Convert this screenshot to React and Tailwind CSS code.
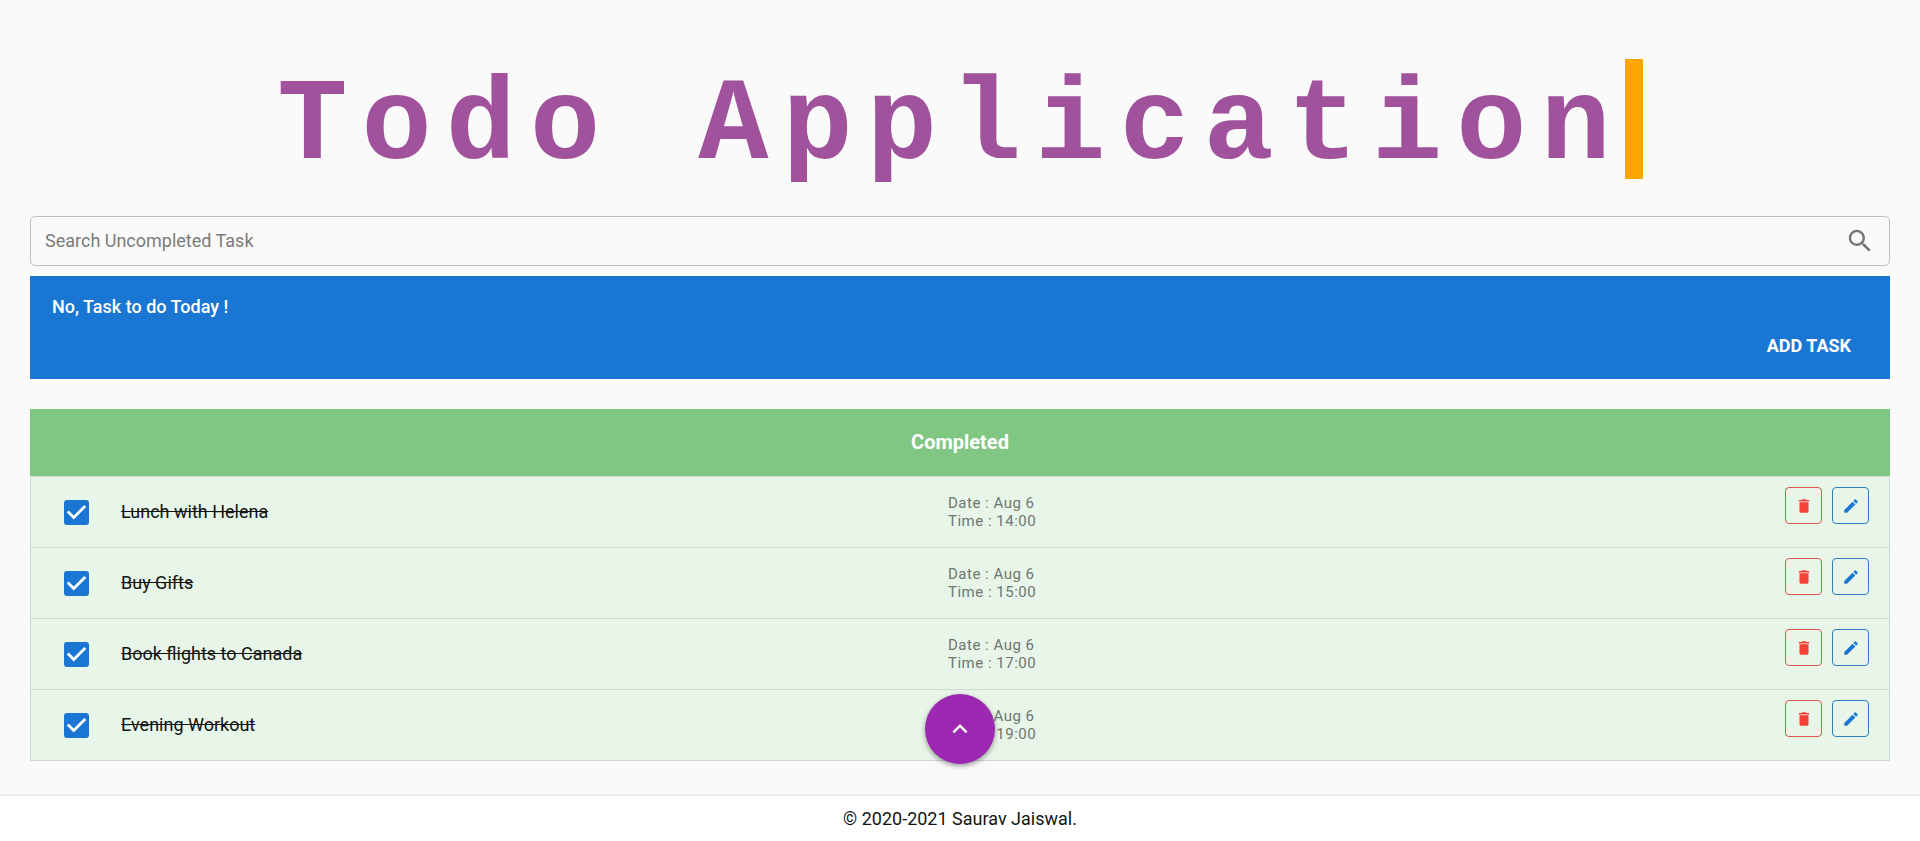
import { useState } from "react";
import { MdDelete, MdEdit, MdKeyboardArrowUp, MdSearch } from "react-icons/md";

const initialTasks = [
  { id: "lunch", title: "Lunch with Helena", date: "Aug 6", time: "14:00", done: true },
  { id: "gifts", title: "Buy Gifts", date: "Aug 6", time: "15:00", done: true },
  { id: "flights", title: "Book flights to Canada", date: "Aug 6", time: "17:00", done: true },
  { id: "workout", title: "Evening Workout", date: "Aug 6", time: "19:00", done: true },
];

function Title() {
  return (
    <header className="flex justify-center pt-[59px]">
      <h1 className="border-r-[18px] border-[#ffa500] pt-4 font-['Liberation_Mono',monospace] text-[117px] leading-[104px] font-bold tracking-[14px] whitespace-nowrap text-[#a0529c]">
        Todo Application
      </h1>
    </header>
  );
}

function SearchBar() {
  return (
    <div className="mt-[37px] flex h-[50px] items-center rounded-[5px] border border-[#c1c1c1] px-[14px]">
      <input
        type="text"
        aria-label="Search Uncompleted Task"
        placeholder="Search Uncompleted Task"
        className="min-w-0 flex-1 bg-transparent text-lg outline-none placeholder:text-[#7b7b7b]"
      />
      <button type="button" aria-label="Search" className="text-[#757575]">
        <MdSearch size={30} />
      </button>
    </div>
  );
}

function TaskRow({ task, onToggle }) {
  return (
    <li className="grid min-h-[71px] grid-cols-2 border-b border-[#cfdacf]">
      <div className="flex items-center pl-[33px]">
        <span className="relative mr-8 flex size-[25px]">
          <input
            id={task.id}
            type="checkbox"
            checked={task.done}
            onChange={onToggle}
            className="peer size-[25px] appearance-none rounded-[3px] border-2 border-[#1976d2] checked:bg-[#1976d2]"
          />
          <svg viewBox="0 0 18 18" aria-hidden="true" className="pointer-events-none absolute inset-0 hidden fill-white peer-checked:block">
            <path d="M7 14 2 9l1.41-1.41L7 11.17l7.59-7.59L16 5z" />
          </svg>
        </span>
        <label htmlFor={task.id} className={task.done ? "text-lg line-through" : "text-lg"}>
          {task.title}
        </label>
      </div>
      <div className="flex justify-between">
        <p className="-ml-3 self-center text-[15px] leading-[18px] tracking-[0.5px] text-[#6f766f]">
          Date : {task.date}
          <br />
          Time : {task.time}
        </p>
        <div className="flex items-start gap-[10px] pt-[10px] pr-5">
          <button type="button" aria-label={"Delete " + task.title} className="flex size-[37px] items-center justify-center rounded-[4px] border border-[#dd5a50] text-[#f44336]">
            <MdDelete size={18} />
          </button>
          <button type="button" aria-label={"Edit " + task.title} className="flex size-[37px] items-center justify-center rounded-[4px] border border-[#2f7fc4] text-[#1976d2]">
            <MdEdit size={18} />
          </button>
        </div>
      </div>
    </li>
  );
}

export default function App() {
  const [tasks, setTasks] = useState(initialTasks);
  const toggle = (id) =>
    setTasks(tasks.map((t) => (t.id === id ? { ...t, done: !t.done } : t)));

  return (
    <div className="flex min-h-screen flex-col bg-[#fafafa] font-[Roboto,sans-serif] text-[#111411]">
      <Title />
      <main className="flex-1 px-[30px]">
        <SearchBar />
        <section className="mt-[10px] bg-[#1976d2] px-[22px] pt-[17px] pb-5 font-medium text-white">
          <p className="text-lg leading-[27px]">No, Task to do Today !</p>
          <div className="mt-3 flex justify-end pr-[17px]">
            <button type="button" className="text-lg leading-[27px] font-bold">ADD TASK</button>
          </div>
        </section>
        <section className="mt-[30px]">
          <h2 className="bg-[#81c784] py-5 text-center text-xl leading-[27px] font-bold text-white">
            Completed
          </h2>
          <ul className="border-x border-t border-[#cfdacf] bg-[#e8f5e9]">
            {tasks.map((task) => (
              <TaskRow key={task.id} task={task} onToggle={() => toggle(task.id)} />
            ))}
          </ul>
        </section>
      </main>
      <footer className="border-t-2 border-[#ececec] bg-white py-[9px] text-center text-lg leading-[27px]">
        © 2020-2021 Saurav Jaiswal.
      </footer>
      <button
        type="button"
        aria-label="Scroll to top"
        onClick={() => window.scrollTo({ top: 0, behavior: "smooth" })}
        className="fixed bottom-[77px] left-1/2 flex size-[70px] -translate-x-1/2 items-center justify-center rounded-full bg-[#9c27b0] text-white shadow-[0_2px_5px_rgba(0,0,0,0.4)]"
      >
        <MdKeyboardArrowUp size={30} />
      </button>
    </div>
  );
}
